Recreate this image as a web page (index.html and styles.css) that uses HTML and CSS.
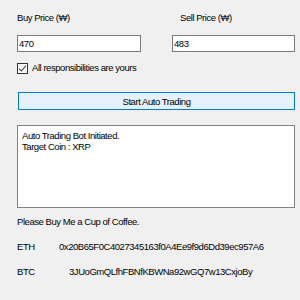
FILE: index.html
```html
<!DOCTYPE html>
<html lang="en">
<head>
    <meta charset="UTF-8">
    <meta name="viewport" content="width=device-width, initial-scale=1.0">
    <title>Auto Trading</title>
    <link rel="stylesheet" href="styles.css">
</head>
<body>
    <div class="window">
        <div class="prices">
            <div class="field field-buy">
                <label class="field-label" for="buyPrice">Buy Price (₩)</label>
                <input class="field-input" type="text" id="buyPrice" value="470">
            </div>
            <div class="field field-sell">
                <label class="field-label" for="sellPrice">Sell Price (₩)</label>
                <input class="field-input" type="text" id="sellPrice" value="483">
            </div>
        </div>

        <label class="agree">
            <span class="check">
                <svg width="9" height="9" viewBox="0 0 9 9"><path d="M1 4.6 L3.4 7 L8 1.6" fill="none" stroke="#444" stroke-width="1.1"/></svg>
            </span>
            All responsibilities are yours
        </label>

        <button class="start-btn" type="button">Start Auto Trading</button>

        <div class="log">Auto Trading Bot Initiated.<br>Target Coin : XRP</div>

        <p class="coffee">Please Buy Me a Cup of Coffee.</p>

        <div class="wallet">
            <span class="wallet-coin">ETH</span>
            <span class="wallet-addr">0x20B65F0C4027345163f0A4Ee9f9d6Dd39ec957A6</span>
        </div>
        <div class="wallet">
            <span class="wallet-coin">BTC</span>
            <span class="wallet-addr wallet-addr-btc">3JUoGmQLfhFBNfKBWNa92wGQ7w13CxjoBy</span>
        </div>
    </div>
</body>
</html>
```

FILE: styles.css
```css
/* Estilos generales */
body {
    margin: 0;
    padding: 0;
    background-color: #f0f0f0;
    font-family: "Liberation Sans", Arial, sans-serif;
    font-size: 9.5px;
    letter-spacing: -0.45px;
    color: #000;
}

.window {
    padding: 12px 6px 0 17px;
}

/* Precios */
.prices {
    display: flex;
}

.field {
    display: flex;
    flex-direction: column;
}

.field-buy {
    width: 124px;
}

.field-sell {
    width: 123px;
    margin-left: 31px;
}

.field-label {
    line-height: 12px;
}

.field-sell .field-label {
    padding-left: 8px;
}

.field-input {
    margin-top: 11px;
    height: 17px;
    box-sizing: border-box;
    border: 1px solid #7a7a7a;
    background-color: #fff;
    padding: 0 1px;
    font-family: inherit;
    font-size: inherit;
    letter-spacing: inherit;
    color: #000;
    outline: none;
}

/* Checkbox */
.agree {
    display: flex;
    align-items: center;
    height: 12px;
    margin-top: 10px;
    line-height: 12px;
}

.check {
    display: flex;
    align-items: center;
    justify-content: center;
    width: 11px;
    height: 11px;
    box-sizing: border-box;
    border: 1px solid #333;
    background-color: #fff;
    margin-right: 4px;
}

/* Boton */
.start-btn {
    display: block;
    margin: 18px 0 0 1px;
    width: 277px;
    height: 18px;
    padding: 0;
    border: 1px solid #0078d7;
    background-color: #e5f1fb;
    font-family: inherit;
    font-size: inherit;
    letter-spacing: inherit;
    color: #000;
}

/* Registro */
.log {
    margin-top: 15px;
    width: 278px;
    height: 83px;
    box-sizing: border-box;
    border: 1px solid #828282;
    background-color: #fff;
    padding: 4px;
    line-height: 11px;
}

.coffee {
    margin: 8px 0 0;
    line-height: 12px;
}

/* Carteras */
.wallet {
    display: flex;
    margin-top: 13px;
    line-height: 12px;
}

.wallet-coin {
    width: 42px;
}

.wallet-addr-btc {
    padding-left: 10px;
}
```
